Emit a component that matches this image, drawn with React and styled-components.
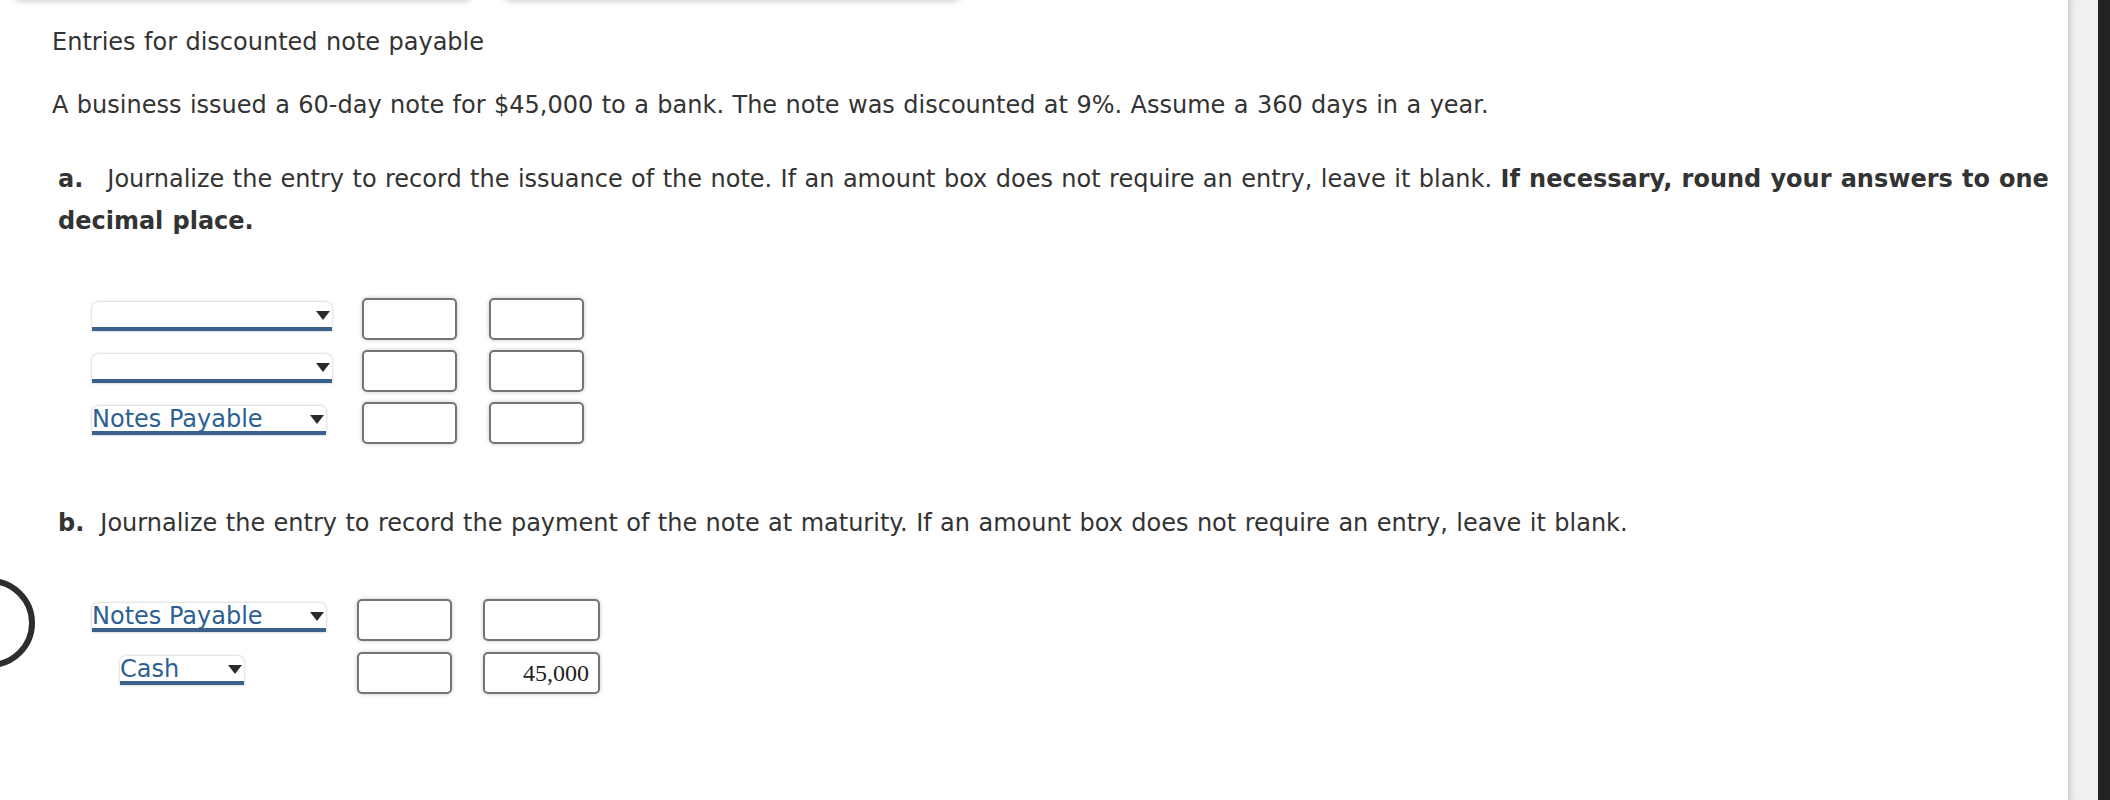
import React from 'react'
import styled, { createGlobalStyle } from 'styled-components'

const GlobalStyle = createGlobalStyle`
  html, body {
    margin: 0;
    padding: 0;
    background: #fff;
    overflow: hidden;
  }
  #root {
    width: 2110px;
    height: 800px;
  }
`

const Window = styled.div`
  width: 2110px;
  height: 800px;
  display: flex;
  overflow: hidden;
`

const Main = styled.div`
  flex: 1;
  position: relative;
  background: #fff;
  font-family: 'DejaVu Sans', Verdana, sans-serif;
  font-size: 24px;
  word-spacing: 0.8px;
  color: #333;
  overflow: hidden;
`

const Track = styled.div`
  width: 30px;
  background: #f0f0f0;
  box-shadow: inset 7px 0 6px -5px rgba(0, 0, 0, 0.18);
`

const Edge = styled.div`
  width: 12px;
  background: #232323;
`

const CardStrip = styled.div`
  display: flex;
  gap: 33px;
  padding-left: 15px;
  height: 24px;
  margin-top: -24px;
`

const TopCard = styled.div`
  width: ${props => props.w}px;
  height: 24px;
  background: #fff;
  border-radius: 0 0 6px 6px;
  box-shadow: 0 1px 6px rgba(0, 0, 0, 0.22);
`

const Content = styled.div`
  padding: 21px 0 0 52px;
`

const Line = styled.p`
  margin: 0;
  line-height: 42px;
`

const Intro = styled(Line)`
  margin-top: 21px;
`

const Part = styled(Line)`
  margin-top: ${props => props.mt}px;
  padding-left: 6px;
  width: 2000px;
`

const Label = styled.b`
  font-weight: bold;
  margin-right: ${props => props.gap}px;
`

const Strong = styled.b`
  font-weight: bold;
`

const Journal = styled.div`
  display: flex;
  flex-direction: column;
  gap: ${props => props.gap}px;
  margin-top: ${props => props.mt}px;
  padding-left: 40px;
`

const Row = styled.div`
  display: flex;
  align-items: center;
  height: 42px;
`

const AccountCell = styled.div`
  width: ${props => props.cell}px;
  padding-left: ${props => props.indent || 0}px;
  box-sizing: border-box;
  display: flex;
  align-items: center;
  padding-bottom: 6px;
`

const Select = styled.div`
  width: ${props => props.w}px;
  height: 25px;
  position: relative;
  background: #fff;
  border-radius: 6px 6px 0 0;
  box-shadow: 0 0 3px rgba(0, 0, 0, 0.28);
  border-bottom: 4px solid #3a6189;
  color: #2c5f94;
  line-height: 27px;
  word-spacing: 0;
  white-space: nowrap;
`

const Arrow = styled.span`
  position: absolute;
  right: 2px;
  top: 9px;
  width: 0;
  height: 0;
  border-left: 7px solid transparent;
  border-right: 7px solid transparent;
  border-top: 9px solid #2b2b2b;
`

const Amount = styled.div`
  width: ${props => props.w}px;
  height: 42px;
  margin-left: ${props => props.ml}px;
  box-sizing: border-box;
  border: 2px solid #747474;
  border-radius: 5px;
  box-shadow: 0 0 4px rgba(0, 0, 0, 0.22);
  background: #fff;
  display: flex;
  align-items: center;
  justify-content: flex-end;
  padding-right: 9px;
  font-family: 'Liberation Serif', 'Times New Roman', serif;
  font-size: 24px;
  color: #222;
`

const HelpRing = styled.div`
  position: absolute;
  left: -55px;
  top: 578px;
  width: 78px;
  height: 78px;
  border: 6px solid #2e2e2e;
  border-radius: 50%;
`

const DropDown = ({ w, label }) => (
  <Select w={w}>
    {label}
    <Arrow />
  </Select>
)

const App = () => (
  <>
    <GlobalStyle />
    <Window>
      <Main>
        <CardStrip>
          <TopCard w={456} />
          <TopCard w={456} />
        </CardStrip>
        <Content>
          <Line>Entries for discounted note payable</Line>
          <Intro>
            A business issued a 60-day note for $45,000 to a bank. The note was discounted at 9%. Assume a 360 days
            in a year.
          </Intro>
          <Part mt={32}>
            <Label gap={24}>a.</Label>
            Journalize the entry to record the issuance of the note. If an amount box does not require an entry,
            leave it blank. <Strong>If necessary, round your answers to one decimal place.</Strong>
          </Part>
          <Journal mt={56} gap={10}>
            <Row>
              <AccountCell cell={270}>
                <DropDown w={240} label="" />
              </AccountCell>
              <Amount w={95} />
              <Amount w={95} ml={32} />
            </Row>
            <Row>
              <AccountCell cell={270}>
                <DropDown w={240} label="" />
              </AccountCell>
              <Amount w={95} />
              <Amount w={95} ml={32} />
            </Row>
            <Row>
              <AccountCell cell={270}>
                <DropDown w={234} label="Notes Payable" />
              </AccountCell>
              <Amount w={95} />
              <Amount w={95} ml={32} />
            </Row>
          </Journal>
          <Part mt={58}>
            <Label gap={16}>b.</Label>
            Journalize the entry to record the payment of the note at maturity. If an amount box does not require an
            entry, leave it blank.
          </Part>
          <Journal mt={55} gap={11}>
            <Row>
              <AccountCell cell={265}>
                <DropDown w={234} label="Notes Payable" />
              </AccountCell>
              <Amount w={95} />
              <Amount w={117} ml={31} />
            </Row>
            <Row>
              <AccountCell cell={265} indent={28}>
                <DropDown w={124} label="Cash" />
              </AccountCell>
              <Amount w={95} />
              <Amount w={117} ml={31}>45,000</Amount>
            </Row>
          </Journal>
        </Content>
        <HelpRing />
      </Main>
      <Track />
      <Edge />
    </Window>
  </>
)

export default App
